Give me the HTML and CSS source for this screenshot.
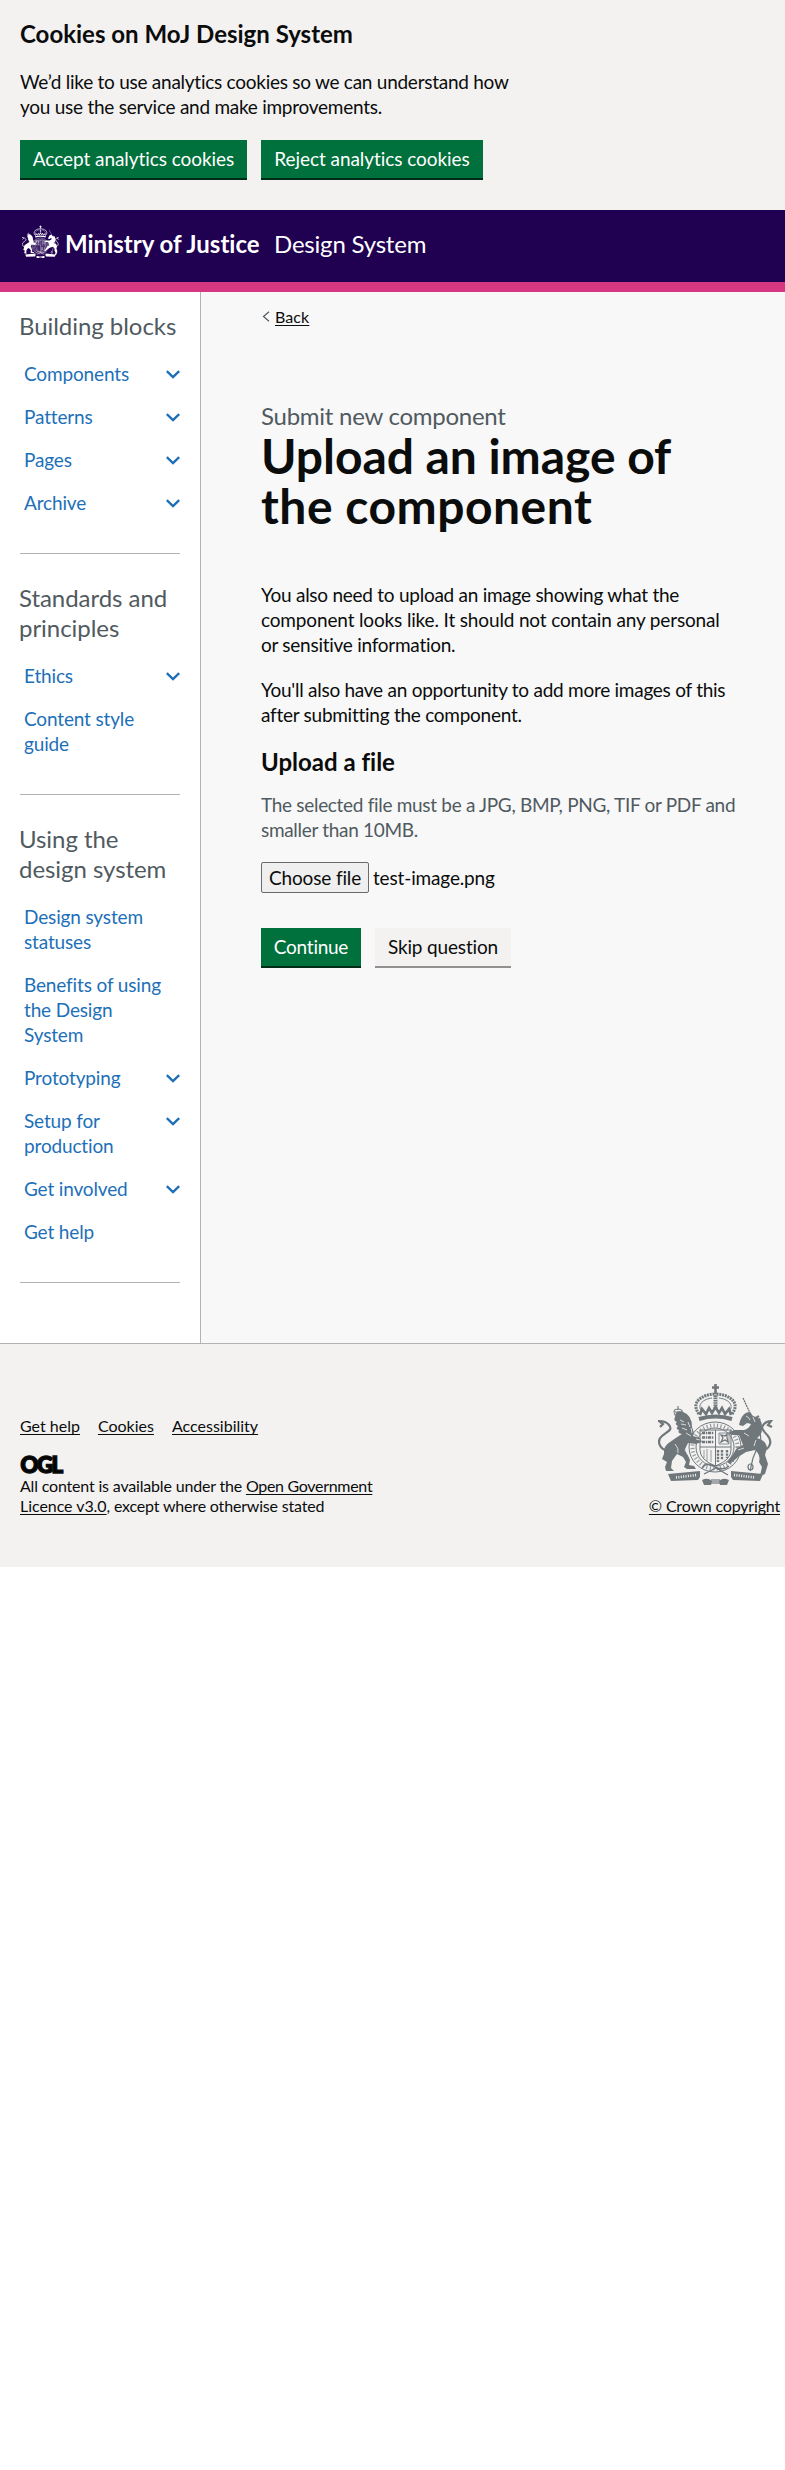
FILE: index.html
```
<!DOCTYPE html>
<html lang="en">
<head>
<meta charset="utf-8">
<title>Upload an image of the component</title>
<link rel="stylesheet" href="styles.css">
</head>
<body>
<svg class="defs" aria-hidden="true">
  <symbol id="chev" viewBox="0 0 14 9"><path d="M.8 1.200 7 7.200 13.200 1.200" fill="none" stroke="currentColor" stroke-width="2.400"/></symbol>
  <symbol id="crest" viewBox="0 0 115 102">
    <g fill="none" stroke="currentColor">
      <!-- crown -->
      <path d="M57.500 0v9M54 3.500h7" stroke-width="2.600"/>
      <path d="M41 30C32 18 44 11 56 10M74 30C83 18 71 11 59 10" stroke-width="3" stroke-dasharray="2 .8"/>
      <path d="M44 28C38 20 46 15 54 14M71 28C77 20 69 15 61 14" stroke-width="1"/>
      <path d="M57.500 9v16" stroke-width="4" stroke-dasharray="1.600 .7"/>
      <path d="M41 35q16.500-5 33 0" stroke-width="4"/>
      <path d="M42 31l2-6 4 5 3-6 3 5 3.500-6 3.500 6 3-5 3 6 4-5 2 6" stroke-width="2.600"/>
      <!-- garter and shield -->
      <ellipse cx="57" cy="63" rx="26" ry="25" stroke-width="1"/>
      <ellipse cx="57" cy="63" rx="22.500" ry="21.500" stroke-width="4" stroke-dasharray="1.200 2.300" opacity=".7"/>
      <ellipse cx="57" cy="63" rx="19" ry="19" stroke-width="1"/>
      <path d="M42 46h31v20q0 10-15.500 16Q42 76 42 66zM57.500 46v36M42 63h31" stroke-width="1"/>
      <path d="M44 49h12M44 53.500h12M44 58h12" stroke-width="2.600" stroke-dasharray="3 .8 1.500 .7"/>
      <path d="M60 66v12M64 66v10M69 66v8" stroke-width="2.400" stroke-dasharray="2.400 1"/>
      <path d="M46 66v8M49 65v12M53 66v12" stroke-width="1" opacity=".7"/>
      <path d="M61 49h10v11H61z" stroke-width=".8"/>
      <path d="M63 58l2-4-2-3 4 1 2-2v4l1 4-3-2z" stroke-width="1.300"/>
      <path d="M44 84q5-7 13-1 9 4 14-1M46 90l12-6 12 7" stroke-width="1.300"/>
      <!-- tails -->
      <path d="M11 66C2 67-2 57 4 52S15 46 11 41Q8 37 1 37l4 3-3 3" stroke-width="2.200"/>
      <path d="M103 66c8 1 12-8 7-14s-8-8-4-12q3-3 7-3l-3 4 4 2" stroke-width="2.200"/>
      <!-- lion coronet, unicorn horn and chain -->
      <path d="M17 31q-3-6 3-6 6 0 4 6zM20 22v4M17 28h7" stroke-width="1.100"/>
      <path d="M85 14l7 15" stroke-width="1.300" stroke-dasharray="2 .6"/>
      <path d="M101 47q4 8-1 15l-5 12-3 13M90 83a2.500 3 0 1 0 5 0 2.500 3 0 1 0-5 0" stroke-width="1.200"/>
      <path d="M99 32q6 8-4 13" stroke-width="3" stroke-dasharray="2 .8"/>
    </g>
    <g fill="currentColor">
      <path d="M17 33q-2 4 2 5-3 2 1 4-3 3 1 4-2 3 3 4-8 5-12 8-7 4-6 12l-2 5 5 3-2 5 1 4h8l-3-3 1-7 5-7 6 3 3 5-2 5 3 2h9l-2-3-5-1 1-5-5-11 3-6 8 1 6-2-2-4-7-2 1-3-2-6q0-12-9-15-5-2-7 1z"/>
      <path d="M92 28q-7 0-10 9l-1 4 4 1 4-3 4 1q-2 5-7 6l-10 0-6 3 5 2 6 0 4 10-6 3-5 8-5 6 3 2 8-7 8-5 9-2q6 5 4 12l3 5-2 9 5-2 3-10-3-9 2-7q-1-8-10-10 5-3 5-9 1-11-9-13z"/>
      <path d="M10 90l32-3v6l-2 3-27 1zM105 90l-32-3v6l2 3 27 1z"/>
      <path d="M44 96q6-3 10 1l-1 4h-7zM71 96q-6-3-10 1l1 4h7z"/>
      <path d="M53 95h9v5h-9z" opacity=".6"/>
    </g>
    <!-- highlights in the mane and coats -->
    <g class="motto" fill="none" stroke-width=".8">
      <path d="M22 36l4 2M23 40l5 1M24 44l5 2M30 38l2 5M33 44l1 5M28 49l5 3M17 60q4 4 3 9M27 66l3 5M38 55l4 1M88 32q3 1 4 4M95 33l2 5M86 49l5 3M80 66l6-2M98 56l-2 6"/>
      <path d="M18 93.500l21-2.500M76 91l21 2.500" stroke-width="2.600" stroke-dasharray="1 1.400"/>
    </g>
  </symbol>
</svg>

<section class="cookie">
  <h2>Cookies on MoJ Design System</h2>
  <p>We’d like to use analytics cookies so we can understand how<br>you use the service and make improvements.</p>
  <div class="buttons">
    <button class="btn accept">Accept analytics cookies</button>
    <button class="btn reject">Reject analytics cookies</button>
  </div>
</section>

<header class="header">
  <svg class="crest-small"><use href="#crest"/></svg>
  <span class="org">Ministry of Justice</span>
  <span class="product">Design System</span>
</header>

<div class="layout">
  <nav class="side">
    <section>
      <h3>Building blocks</h3>
      <ul>
        <li><a>Components</a><svg><use href="#chev"/></svg></li>
        <li><a>Patterns</a><svg><use href="#chev"/></svg></li>
        <li><a>Pages</a><svg><use href="#chev"/></svg></li>
        <li><a>Archive</a><svg><use href="#chev"/></svg></li>
      </ul>
    </section>
    <section>
      <h3>Standards and<br>principles</h3>
      <ul>
        <li><a>Ethics</a><svg><use href="#chev"/></svg></li>
        <li><a>Content style<br>guide</a></li>
      </ul>
    </section>
    <section>
      <h3>Using the<br>design system</h3>
      <ul>
        <li><a>Design system<br>statuses</a></li>
        <li><a>Benefits of using<br>the Design<br>System</a></li>
        <li><a>Prototyping</a><svg><use href="#chev"/></svg></li>
        <li><a>Setup for<br>production</a><svg><use href="#chev"/></svg></li>
        <li><a>Get involved</a><svg><use href="#chev"/></svg></li>
        <li><a>Get help</a></li>
      </ul>
    </section>
  </nav>

  <main>
    <div class="back">
      <svg viewBox="0 0 8 11"><path d="M7 .7 1.500 5.500 7 10.300" fill="none" stroke="#505a5f" stroke-width="1.200"/></svg>
      <a>Back</a>
    </div>
    <span class="caption">Submit new component</span>
    <h1><span class="h1-a">Upload an image of</span><br><span class="h1-b">the component</span></h1>
    <p>You also need to upload an image showing what the<br><span class="wide">component looks like. It should not contain any personal</span><br>or sensitive information.</p>
    <p>You'll also have an opportunity to add more images of this<br>after submitting the component.</p>
    <h2>Upload a file</h2>
    <p class="hint">The selected file must be a JPG, BMP, PNG, TIF or PDF and<br>smaller than 10MB.</p>
    <div class="file"><button>Choose file</button><span>test-image.png</span></div>
    <div class="buttons">
      <button class="btn continue">Continue</button>
      <button class="btn secondary">Skip question</button>
    </div>
  </main>
</div>

<footer>
  <div class="meta">
    <div class="links"><a>Get help</a><a>Cookies</a><a>Accessibility</a></div>
    <svg class="ogl" viewBox="0 0 42 18"><text x=".5" y="16.700" textLength="41" lengthAdjust="spacingAndGlyphs">OGL</text></svg>
    <p>All content is available under the <a class="lic-a">Open Government</a><br><a class="lic-b">Licence v3.0</a>, except where otherwise stated</p>
  </div>
  <div class="copy">
    <svg><use href="#crest"/></svg>
    <a>© Crown copyright</a>
  </div>
</footer>
</body>
</html>
```
FILE: styles.css
```
* { box-sizing: border-box; }
body {
  margin: 0;
  background: #fff;
  color: #0b0c0c;
  font: 19px/25px Lato, "Liberation Sans", sans-serif;
  letter-spacing: -.26px;
  font-variant-ligatures: none;
  white-space: nowrap;
}
h1, h2, h3, p, ul { margin: 0; padding: 0; }
h2 { font-size: 24px; line-height: 30px; font-weight: 700; letter-spacing: 0; }
ul { list-style: none; }
button { font: inherit; letter-spacing: inherit; color: inherit; margin: 0; }
.defs { display: block; width: 0; height: 0; }

.cookie { height: 210px; padding: 19px 20px 0; background: #f3f2f1; }
.cookie p { margin-top: 20px; }
.buttons { display: flex; gap: 14px; }
.cookie .buttons { margin-top: 21px; }
.btn {
  height: 38px;
  padding: 0 0 1px;
  border: 0;
  background: #00703c;
  box-shadow: 0 2px 0 #002d18;
  color: #fff;
  line-height: 25px;
}
.accept { width: 227px; letter-spacing: -.06px; }
.reject { width: 222px; letter-spacing: -.06px; }

.header {
  display: flex;
  height: 82px;
  padding: 15px 20px 0 22px;
  background: #200050;
  border-bottom: 10px solid #d53880;
  color: #fff;
  font-size: 24px;
  line-height: 30px;
}
.crest-small { width: 37px; height: 34px; margin-right: 6px; }
.crest-small .motto { stroke: #200050; }
.org { width: 209px; margin-top: 4px; font-weight: 700; letter-spacing: 0; }
.product { margin-top: 4px; letter-spacing: -.2px; }

.layout { display: flex; height: 1051px; }
.side { width: 201px; padding: 19px 20px 0; border-right: 1px solid #b1b4b6; }
.side section { padding-bottom: 38px; border-bottom: 1px solid #b1b4b6; margin-bottom: 29px; }
.side h3 {
  margin: 0 0 20px -1px;
  font-size: 24px;
  line-height: 30px;
  font-weight: 400;
  letter-spacing: -.05px;
  color: #505a5f;
}
.side ul { display: grid; gap: 18px; padding-left: 4px; }
.side li { display: flex; justify-content: space-between; color: #1d70b8; letter-spacing: -.15px; }
.side li svg { width: 14px; height: 9px; margin-top: 9px; }

main { flex: 1; padding: 15px 0 0 60px; background: #f8f8f8; }
.back { display: flex; height: 20px; font-size: 16px; line-height: 20px; letter-spacing: .1px; }
.back svg { width: 8px; height: 11px; margin: 4px 5px 0 1px; }
footer a, .back a { text-decoration: underline; text-decoration-thickness: 1px; text-underline-offset: 2px; text-decoration-skip-ink: none; }
.caption {
  display: block;
  margin-top: 74px;
  font-size: 24px;
  line-height: 30px;
  letter-spacing: -.26px;
  color: #505a5f;
}
h1 { margin-bottom: 51px; font-size: 48px; line-height: 50px; font-weight: 700; letter-spacing: 0; }
.h1-a { letter-spacing: -.05px; }
.h1-b { letter-spacing: .5px; }
main p { margin-bottom: 20px; }
.wide { letter-spacing: -.15px; }
main h2 { margin-bottom: 15px; }
main .hint { margin-bottom: 20px; color: #505a5f; letter-spacing: -.31px; }
.file { display: flex; align-items: center; height: 31px; gap: 4px; letter-spacing: -.15px; }
.file button {
  width: 108px;
  height: 31px;
  padding: 0 0 1px;
  background: #efefef;
  border: 1px solid #6b6b6b;
  border-radius: 2px;
  line-height: 25px;
}
.file span { margin-top: -1px; }
main .buttons { margin-top: 35px; }
.continue { width: 100px; }
.secondary { width: 136px; background: #f3f2f1; box-shadow: 0 2px 0 #929191; color: #0b0c0c; letter-spacing: -.15px; }

footer {
  display: flex;
  justify-content: space-between;
  height: 224px;
  padding: 0 5px 0 20px;
  border-top: 1px solid #b1b4b6;
  background: #f3f2f1;
  font-size: 16px;
  line-height: 20px;
  letter-spacing: -.18px;
}
.meta { padding-top: 72px; }
.links { display: flex; gap: 18px; letter-spacing: 0; }
.ogl { display: block; width: 42px; height: 18px; margin: 20px 0 2px; overflow: visible; }
.ogl text { font: 900 22px/1 Lato, sans-serif; letter-spacing: -1.500px; stroke: #0b0c0c; stroke-width: 1.600px; }
.lic-a { letter-spacing: -.3px; }
.lic-b { letter-spacing: -.05px; }
.copy { display: flex; flex-direction: column; align-items: flex-end; padding-top: 40px; }
.copy svg { width: 115px; height: 102px; margin: 0 7px 10px 0; color: #6f777b; }
.motto { stroke: #f3f2f1; }
```
